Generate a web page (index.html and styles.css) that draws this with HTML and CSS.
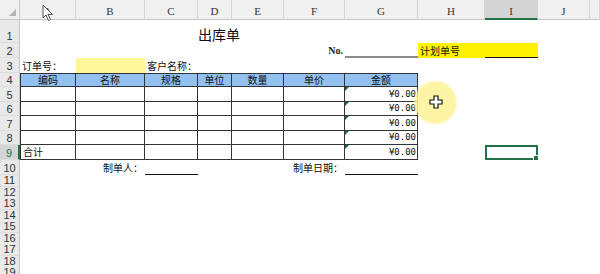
FILE: index.html
```html
<!DOCTYPE html>
<html lang="zh">
<head>
<meta charset="utf-8">
<link rel="stylesheet" href="styles.css">
</head>
<body>
<div class="sheet">
  <div class="row h20">
    <div class="corner"><span class="tri-corner"></span></div>
    <div class="ch">A</div><div class="ch">B</div><div class="ch">C</div><div class="ch">D</div><div class="ch">E</div>
    <div class="ch">F</div><div class="ch">G</div><div class="ch">H</div><div class="ch sel">I</div><div class="ch">J</div><div class="ch"></div>
  </div>
  <div class="row h23">
    <div class="rh">1</div>
    <div class="c s7 title">出库单</div>
  </div>
  <div class="row h15">
    <div class="rh">2</div>
    <div class="c s5"></div>
    <div class="c right serif">No.</div>
    <div class="c uline-gray"></div>
    <div class="c yellow">计划单号</div>
    <div class="c yellow uline"></div>
  </div>
  <div class="row h15">
    <div class="rh">3</div>
    <div class="c">订单号：</div>
    <div class="c pale"></div>
    <div class="c">客户名称：</div>
  </div>
  <div class="row h14">
    <div class="rh">4</div>
    <div class="c b bl bt head">编码</div>
    <div class="c b bt head">名称</div>
    <div class="c b bt head">规格</div>
    <div class="c b bt head">单位</div>
    <div class="c b bt head">数量</div>
    <div class="c b bt head">单价</div>
    <div class="c b bt head">金额</div>
  </div>
  <div class="row h15">
    <div class="rh">5</div>
    <div class="c b bl"></div><div class="c b"></div><div class="c b"></div><div class="c b"></div><div class="c b"></div><div class="c b"></div>
    <div class="c b money tri">¥0.00</div>
  </div>
  <div class="row h14">
    <div class="rh">6</div>
    <div class="c b bl"></div><div class="c b"></div><div class="c b"></div><div class="c b"></div><div class="c b"></div><div class="c b"></div>
    <div class="c b money tri">¥0.00</div>
  </div>
  <div class="row h15">
    <div class="rh">7</div>
    <div class="c b bl"></div><div class="c b"></div><div class="c b"></div><div class="c b"></div><div class="c b"></div><div class="c b"></div>
    <div class="c b money tri">¥0.00</div>
  </div>
  <div class="row h14">
    <div class="rh">8</div>
    <div class="c b bl"></div><div class="c b"></div><div class="c b"></div><div class="c b"></div><div class="c b"></div><div class="c b"></div>
    <div class="c b money tri">¥0.00</div>
  </div>
  <div class="row h15">
    <div class="rh sel">9</div>
    <div class="c b bl">合计</div><div class="c b"></div><div class="c b"></div><div class="c b"></div><div class="c b"></div><div class="c b"></div>
    <div class="c b money tri">¥0.00</div>
    <div class="c"></div>
    <div class="c active"></div>
  </div>
  <div class="row h15">
    <div class="rh">10</div>
    <div class="c"></div>
    <div class="c right">制单人：</div>
    <div class="c uline"></div>
    <div class="c"></div>
    <div class="c"></div>
    <div class="c right">制单日期：</div>
    <div class="c uline"></div>
  </div>
  <div class="row h12"><div class="rh">11</div></div>
  <div class="row h11"><div class="rh">12</div></div>
  <div class="row h12"><div class="rh">13</div></div>
  <div class="row h11"><div class="rh">14</div></div>
  <div class="row h12"><div class="rh">15</div></div>
  <div class="row h11"><div class="rh">16</div></div>
  <div class="row h12"><div class="rh">17</div></div>
  <div class="row h11"><div class="rh">18</div></div>
  <div class="row h12"><div class="rh">19</div></div>

  <div class="spot"></div>
  <svg class="cross" width="14" height="14" viewBox="0 0 14 14"><path d="M5 1 H9 V5 H13 V9 H9 V13 H5 V9 H1 V5 H5 Z" fill="#fff" stroke="#111" stroke-width="1.2"/></svg>
  <svg class="pointer" width="12" height="18" viewBox="0 0 12 18"><path d="M1 1 L1 14 L4 11 L6.5 16.5 L8.5 15.5 L6 10.5 L10.5 10.5 Z" fill="#fff" stroke="#555" stroke-width="1"/></svg>
</div>
</body>
</html>
```
FILE: styles.css
```css
body {
  margin: 0;
  background: #fff;
  font-family: "Noto Sans CJK SC", "Noto Sans", sans-serif;
  font-size: 10px;
  color: #111;
}
.sheet {
  position: relative;
  width: 600px;
  height: 274px;
  overflow: hidden;
  background: #fff;
}
.row {
  display: grid;
  grid-template-columns: 20px 56px 69px 53px 34px 52px 61px 73px 67px 53px 52px 1fr;
}
.h20 { height: 20px; }
.h23 { height: 23px; }
.h15 { height: 15px; }
.h14 { height: 14px; }
.h12 { height: 12px; }
.h11 { height: 11px; }

.corner {
  position: relative;
  background: #f0f0f0;
  border-right: 1px solid #c8c8c8;
  border-bottom: 1px solid #c6c6c6;
  box-sizing: border-box;
}
.tri-corner {
  position: absolute;
  right: 3px;
  bottom: 3px;
  width: 0;
  height: 0;
  border-left: 7px solid transparent;
  border-bottom: 7px solid #b4b4b4;
}
.ch {
  background: #f0f0f0;
  border-right: 1px solid #d4d4d4;
  border-bottom: 1px solid #c6c6c6;
  box-sizing: border-box;
  display: flex;
  align-items: flex-end;
  justify-content: center;
  padding-bottom: 2px;
  font-family: "Liberation Serif", serif;
  font-size: 11px;
  line-height: 11px;
  color: #333;
}
.ch.sel {
  background: #d4d4d4;
  border-bottom: 2px solid #217346;
  padding-bottom: 1px;
}
.rh {
  background: #e9e9e9;
  border-right: 1px solid #c8c8c8;
  border-bottom: 1px solid #dcdcdc;
  box-sizing: border-box;
  display: flex;
  align-items: flex-end;
  justify-content: center;
  font-family: "Liberation Sans", sans-serif;
  font-size: 11px;
  line-height: 11px;
  color: #333;
}
.rh.sel {
  background: #d4d4d4;
  color: #217346;
  border-right: 2px solid #217346;
}

.c {
  position: relative;
  display: flex;
  align-items: flex-end;
  box-sizing: border-box;
  padding: 0 2px 1px 2px;
  white-space: nowrap;
  line-height: 12px;
  min-width: 0;
}
.s5 { grid-column: span 5; }
.s7 { grid-column: span 7; }
.title {
  justify-content: center;
  font-size: 14px;
  line-height: 16px;
  padding-bottom: 1px;
}
.right { justify-content: flex-end; }
.serif { font-family: "Liberation Serif", serif; font-size: 10px; font-weight: bold; color: #222; }
.uline-gray { border-bottom: 2px solid #8c8c8c; }
.uline { border-bottom: 1px solid #111; }
.yellow { background: #fff200; }
.pale { background: #fff69a; }

.b {
  border-right: 1px solid #333;
  border-bottom: 1px solid #333;
}
.bl { border-left: 1px solid #333; }
.bt { border-top: 1px solid #333; }
.head {
  background: #92c1f0;
  justify-content: center;
  padding-bottom: 0;
}
.money {
  justify-content: flex-end;
  font-family: "DejaVu Sans Mono", monospace;
  font-size: 9px;
  padding-right: 1px;
}
.tri::before {
  content: "";
  position: absolute;
  left: 0;
  top: 0;
  width: 0;
  height: 0;
  border-top: 4px solid #1d6b38;
  border-right: 4px solid transparent;
}
.active {
  border: 2px solid #217346;
}
.active::after {
  content: "";
  position: absolute;
  right: -3px;
  bottom: -3px;
  width: 4px;
  height: 4px;
  background: #217346;
  border: 1px solid #fff;
}

.spot {
  position: absolute;
  left: 413px;
  top: 80px;
  width: 45px;
  height: 45px;
  border-radius: 50%;
  background: radial-gradient(circle, rgba(252, 242, 150, 0.9) 0%, rgba(252, 242, 150, 0.85) 62%, rgba(252, 242, 150, 0) 72%);
}
.cross {
  position: absolute;
  left: 429px;
  top: 95px;
}
.pointer {
  position: absolute;
  left: 42px;
  top: 4px;
}
```
